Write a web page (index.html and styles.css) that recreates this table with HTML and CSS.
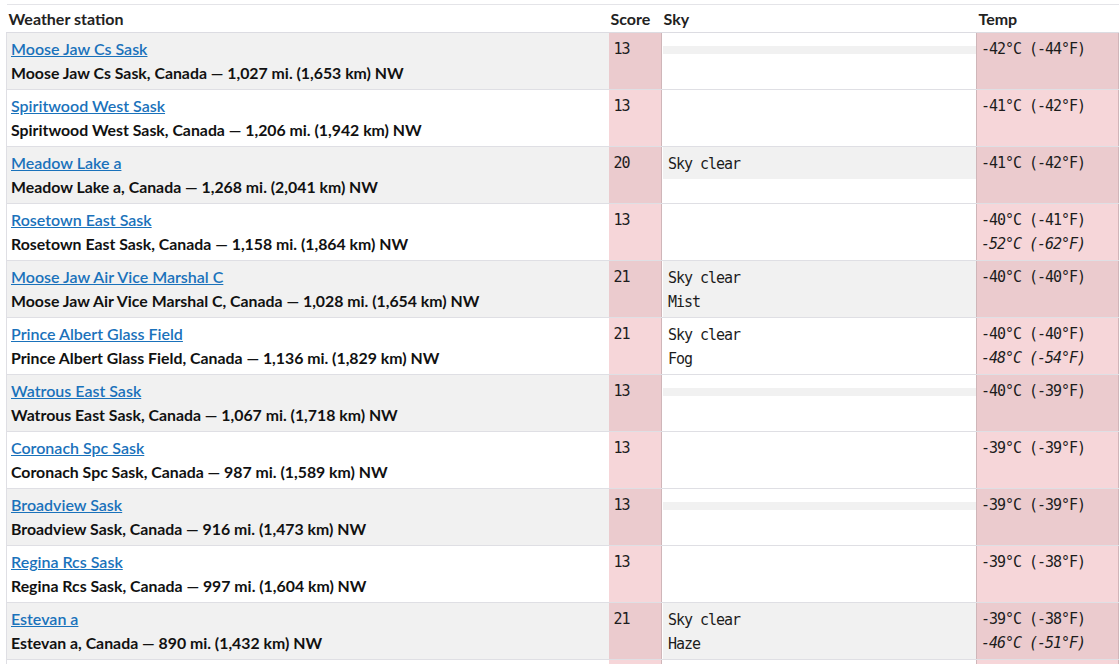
FILE: index.html
```html
<!DOCTYPE html>
<html lang="en">
<head>
<meta charset="utf-8">
<title>Weather stations</title>
<link rel="stylesheet" href="styles.css">
</head>
<body>
<div class="page">
<table class="stations">
  <colgroup>
    <col class="c-station"><col class="c-score"><col class="c-sky"><col class="c-temp">
  </colgroup>
  <thead>
    <tr><th>Weather station</th><th>Score</th><th>Sky</th><th>Temp</th></tr>
  </thead>
  <tbody>
    <tr>
      <td class="station"><a href="#">Moose Jaw Cs Sask</a><div class="sub">Moose Jaw Cs Sask, Canada — 1,027 mi. (1,653 km) NW</div></td>
      <td class="score">13</td>
      <td class="sky"><div class="sky-list empty"></div></td>
      <td class="temp">-42°C (-44°F)</td>
    </tr>
    <tr>
      <td class="station"><a href="#">Spiritwood West Sask</a><div class="sub">Spiritwood West Sask, Canada — 1,206 mi. (1,942 km) NW</div></td>
      <td class="score">13</td>
      <td class="sky"></td>
      <td class="temp">-41°C (-42°F)</td>
    </tr>
    <tr>
      <td class="station"><a href="#">Meadow Lake a</a><div class="sub">Meadow Lake a, Canada — 1,268 mi. (2,041 km) NW</div></td>
      <td class="score">20</td>
      <td class="sky"><div class="sky-list">Sky clear</div></td>
      <td class="temp">-41°C (-42°F)</td>
    </tr>
    <tr>
      <td class="station"><a href="#">Rosetown East Sask</a><div class="sub">Rosetown East Sask, Canada — 1,158 mi. (1,864 km) NW</div></td>
      <td class="score">13</td>
      <td class="sky"></td>
      <td class="temp">-40°C (-41°F)<div class="feel">-52°C (-62°F)</div></td>
    </tr>
    <tr>
      <td class="station"><a href="#">Moose Jaw Air Vice Marshal C</a><div class="sub">Moose Jaw Air Vice Marshal C, Canada — 1,028 mi. (1,654 km) NW</div></td>
      <td class="score">21</td>
      <td class="sky"><div class="sky-list">Sky clear<br>Mist</div></td>
      <td class="temp">-40°C (-40°F)</td>
    </tr>
    <tr>
      <td class="station"><a href="#">Prince Albert Glass Field</a><div class="sub">Prince Albert Glass Field, Canada — 1,136 mi. (1,829 km) NW</div></td>
      <td class="score">21</td>
      <td class="sky"><div class="sky-list">Sky clear<br>Fog</div></td>
      <td class="temp">-40°C (-40°F)<div class="feel">-48°C (-54°F)</div></td>
    </tr>
    <tr>
      <td class="station"><a href="#">Watrous East Sask</a><div class="sub">Watrous East Sask, Canada — 1,067 mi. (1,718 km) NW</div></td>
      <td class="score">13</td>
      <td class="sky"><div class="sky-list empty"></div></td>
      <td class="temp">-40°C (-39°F)</td>
    </tr>
    <tr>
      <td class="station"><a href="#">Coronach Spc Sask</a><div class="sub">Coronach Spc Sask, Canada — 987 mi. (1,589 km) NW</div></td>
      <td class="score">13</td>
      <td class="sky"></td>
      <td class="temp">-39°C (-39°F)</td>
    </tr>
    <tr>
      <td class="station"><a href="#">Broadview Sask</a><div class="sub">Broadview Sask, Canada — 916 mi. (1,473 km) NW</div></td>
      <td class="score">13</td>
      <td class="sky"><div class="sky-list empty"></div></td>
      <td class="temp">-39°C (-39°F)</td>
    </tr>
    <tr>
      <td class="station"><a href="#">Regina Rcs Sask</a><div class="sub">Regina Rcs Sask, Canada — 997 mi. (1,604 km) NW</div></td>
      <td class="score">13</td>
      <td class="sky"></td>
      <td class="temp">-39°C (-38°F)</td>
    </tr>
    <tr>
      <td class="station"><a href="#">Estevan a</a><div class="sub">Estevan a, Canada — 890 mi. (1,432 km) NW</div></td>
      <td class="score">21</td>
      <td class="sky"><div class="sky-list">Sky clear<br>Haze</div></td>
      <td class="temp">-39°C (-38°F)<div class="feel">-46°C (-51°F)</div></td>
    </tr>
    <tr class="partial">
      <td class="station"></td>
      <td class="score"></td>
      <td class="sky"></td>
      <td class="temp"></td>
    </tr>
  </tbody>
</table>
</div>
</body>
</html>
```

FILE: styles.css
```css
html, body {
  margin: 0;
  padding: 0;
  background: #ffffff;
}

.page {
  padding: 4px 1px 0 6px;
  font-family: Lato, "Liberation Sans", sans-serif;
  color: #111111;
}

.stations {
  width: 100%;
  table-layout: fixed;
  border-collapse: collapse;
  border-top: 1px solid #e4e4e8;
}

.c-station { width: 602px; }
.c-score { width: 53px; }
.c-sky { width: 315px; }
.c-temp { width: 142px; }

.stations th {
  text-align: left;
  font-weight: 700;
  font-size: 16px;
  color: #222222;
  padding: 5px 2px 4px 2px;
  line-height: 18px;
  border-bottom: 1px solid #dcdce2;
}

.stations td {
  vertical-align: top;
  border-bottom: 1px solid #dfdfe4;
  padding: 0;
}

.stations tbody tr:nth-child(odd) {
  background: #f1f1f1;
}

.stations tbody tr:nth-child(even) {
  background: #ffffff;
}

.stations tr.partial td {
  height: 56px;
}

.station {
  border-left: 1px solid #dfdfe4;
  padding: 4px 4px 4px 4px !important;
  line-height: 24px;
}

.station a {
  font-size: 16px;
  color: #1a72bb;
  font-weight: 600;
  text-decoration: underline;
}

.sub {
  font-size: 15.85px;
  font-weight: 700;
  color: #111111;
}

.score,
.temp,
.sky {
  font-family: "DejaVu Sans Mono", "Liberation Mono", monospace;
  font-size: 15px;
  letter-spacing: -1.03px;
  line-height: 24px;
  color: #1c1c1c;
}

.score {
  padding: 4px 5px 0 5px !important;
  border-right: 1px solid #cfb6b9;
}

.stations tbody tr:nth-child(odd) .score,
.stations tbody tr:nth-child(odd) .temp {
  background: #ebcbce;
}

.stations tbody tr:nth-child(even) .score,
.stations tbody tr:nth-child(even) .temp {
  background: #f6d6d9;
}

.temp {
  padding: 4px 4px 0 4px !important;
  border-left: 1px solid #cfb6b9;
  border-right: 1px solid #cfb6b9;
}

.feel {
  font-style: italic;
}

.stations td.sky {
  background: #ffffff;
}

.sky-list {
  margin-left: 1px;
  padding: 5px 5px 3px 5px;
}

.stations tbody tr:nth-child(odd) .sky-list {
  background: #f1f1f1;
}

.sky-list.empty {
  margin-top: 13px;
  padding: 0;
  height: 8px;
}
```
